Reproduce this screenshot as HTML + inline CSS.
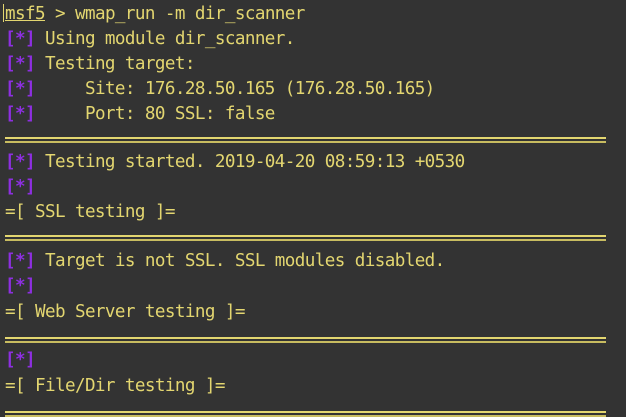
<!DOCTYPE html>
<html><head><style>
body{margin:0;width:626px;height:416px;background:#333333;overflow:hidden;font-family:"DejaVu Sans Mono","Liberation Mono",monospace;font-size:17.6px;letter-spacing:-0.6px;color:#e3d670;}
.r{position:absolute;left:5px;white-space:pre;line-height:20px;}
.p{color:#8d2fe0;font-weight:bold;}
.u{text-decoration:underline;}
.d{position:absolute;left:5px;width:601px;height:2px;border-top:2px solid #e3d670;border-bottom:2px solid #c8bc60;}
.cur{position:absolute;left:3px;top:4px;width:1px;height:18px;background:#e3d670;}
</style></head><body>
<div class="cur"></div>
<div class="r" style="top:4px"><span class="u">msf5</span> &gt; wmap_run -m dir_scanner</div>
<div class="r" style="top:29px"><span class="p">[*]</span> Using module dir_scanner.</div>
<div class="r" style="top:54px"><span class="p">[*]</span> Testing target:</div>
<div class="r" style="top:79px"><span class="p">[*]</span>     Site: 176.28.50.165 (176.28.50.165)</div>
<div class="r" style="top:104px"><span class="p">[*]</span>     Port: 80 SSL: false</div>
<div class="d" style="top:137px"></div>
<div class="r" style="top:152px"><span class="p">[*]</span> Testing started. 2019-04-20 08:59:13 +0530</div>
<div class="r" style="top:177px"><span class="p">[*]</span></div>
<div class="r" style="top:202px">=[ SSL testing ]=</div>
<div class="d" style="top:235px"></div>
<div class="r" style="top:251px"><span class="p">[*]</span> Target is not SSL. SSL modules disabled.</div>
<div class="r" style="top:276px"><span class="p">[*]</span></div>
<div class="r" style="top:302px">=[ Web Server testing ]=</div>
<div class="d" style="top:337px"></div>
<div class="r" style="top:350px"><span class="p">[*]</span></div>
<div class="r" style="top:376px">=[ File/Dir testing ]=</div>
<div class="d" style="top:411px"></div>
</body></html>
